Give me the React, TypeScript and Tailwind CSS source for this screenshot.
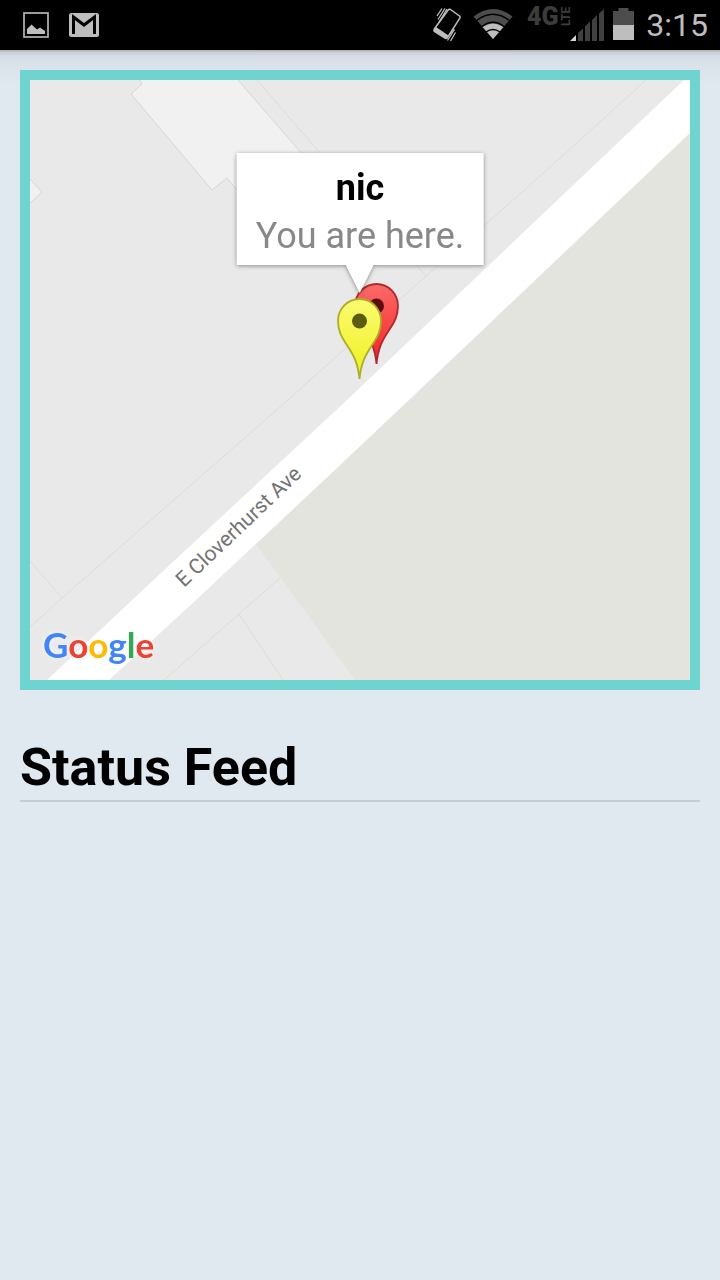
function PictureIcon() {
  return (
    <svg className="h-[26px] w-[26px]" viewBox="0 0 26 26" aria-hidden="true">
      <rect x="1" y="1" width="24" height="24" fill="none" stroke="#b4b7b2" strokeWidth="1.7" />
      <path d="M4 22V17L8.5 12.5L14 17.5L17 15.5L22 19V22Z" fill="#bebebe" />
    </svg>
  );
}

function MailIcon() {
  return (
    <svg className="h-[24px] w-[30px]" viewBox="0 0 30 24" aria-hidden="true">
      <rect width="30" height="24" rx="2.5" fill="#bebebe" />
      <path d="M4.5 21V4L15 12L25.5 4V21" fill="none" stroke="#000" strokeWidth="3" />
    </svg>
  );
}

function VibrateIcon() {
  return (
    <svg className="h-[34px] w-[28px]" viewBox="0 0 28 34" aria-hidden="true">
      <path
        d="M17.500 1.500L26.500 8Q27.500 9 26.800 10.200L14.500 29.500Q13.500 31 12 30.200L1.500 23.500Q0.500 22.500 1.300 21L15 2.200Q16 .8 17.500 1.500Z"
        fill="none"
        stroke="#bebebe"
        strokeWidth="1.500"
      />
      <path d="M3 19L15.500 27.500L13 31L1 23.500V21.500Z" fill="#bebebe" />
      <path d="M4 8L9 .5M5 11.500L12 .5M6 14L14 1" stroke="#bebebe" strokeWidth="1.300" />
      <path d="M14.500 32.500L21.500 21.500M17.500 33L22.500 24.500M17 26L20.500 20.500" stroke="#bebebe" strokeWidth="1.300" />
    </svg>
  );
}

function WifiIcon() {
  return (
    <svg className="h-[30px] w-[40px]" viewBox="0 0 40 30" aria-hidden="true">
      <path d="M0.500 7.500Q20 -7.500 39.500 7.500L20 30Z" fill="#4d4d4d" />
      <path d="M9.500 18Q20 11 30.500 18L20 30Z" fill="#bebebe" />
      <path d="M3.500 11.500Q20 -1 36.500 11.500M9 17.500Q20 9 31 17.500M13 23Q20 18 27 23" fill="none" stroke="#000" strokeWidth="1.500" />
    </svg>
  );
}

function NetworkIcon() {
  return (
    <svg className="h-[50px] w-[78px]" viewBox="0 -8 78 50" role="img" aria-label="4G LTE signal">
      <text x="0" y="17" fill="#3c3c3c" fontFamily="Roboto, sans-serif" fontSize="25" fontWeight="900">
        4G
      </text>
      <text
        transform="translate(43 18) rotate(-90)"
        fill="#3c3c3c"
        fontFamily="Roboto, sans-serif"
        fontSize="12"
        fontWeight="700"
      >
        LTE
      </text>
      <path d="M43 33L49 27V33Z" fill="#d4d4d4" />
      <path d="M51 33V25L56 20.500V33ZM58 33V18.500L63 13.500V33ZM65 33V12L70 7V33ZM72 33V5.500L77 1V33Z" fill="#404040" />
    </svg>
  );
}

function BatteryIcon() {
  return (
    <svg className="h-[32px] w-[21px]" viewBox="0 0 21 32" aria-hidden="true">
      <path d="M0 3H5.500V0H15.500V3H21V17H0Z" fill="#4d4d4d" />
      <path d="M0 17H21V32H0Z" fill="#bebebe" />
    </svg>
  );
}

function StatusBar() {
  return (
    <header className="flex h-[50px] items-center justify-between bg-black pl-[23px] pr-3">
      <div className="flex items-center gap-5">
        <PictureIcon />
        <MailIcon />
      </div>
      <div className="flex items-center gap-3">
        <VibrateIcon />
        <div className="pb-[2px] pr-[2px]">
          <WifiIcon />
        </div>
        <div className="flex items-center gap-2">
          <NetworkIcon />
          <div className="pb-[2px]">
            <BatteryIcon />
          </div>
        </div>
        <time className="text-[32px] leading-[50px] text-[#bebebe]">3:15</time>
      </div>
    </header>
  );
}

type PinProps = { x: number; y: number; fill: string; stroke: string; dot: string };

function Pin({ x, y, fill, stroke, dot }: PinProps) {
  return (
    <g transform={`translate(${x} ${y})`}>
      <path
        d="M0 58C-1.500 42 -6 34 -12 25C-18 16 -21.500 10 -21.500 0A21.500 22 0 0 1 21.500 0C21.500 10 18 16 12 25C6 34 1.500 42 0 58Z"
        fill={fill}
        stroke={stroke}
        strokeWidth="1.800"
      />
      <circle r="7.500" fill={dot} />
    </g>
  );
}

function MapCanvas() {
  return (
    <svg
      className="block h-[600px] w-full"
      viewBox="0 0 660 600"
      preserveAspectRatio="xMidYMid slice"
      role="img"
      aria-label="Map of E Cloverhurst Ave"
    >
      <defs>
        <linearGradient id="yellowPin" x1="0" y1="0" x2="0" y2="1">
          <stop offset="0" stopColor="#fbfb72" />
          <stop offset="0.6" stopColor="#f4f43f" />
          <stop offset="1" stopColor="#eeee22" />
        </linearGradient>
        <linearGradient id="redPin" x1="0" y1="0" x2="0" y2="1">
          <stop offset="0" stopColor="#fb6a6a" />
          <stop offset="0.6" stopColor="#f64040" />
          <stop offset="1" stopColor="#ee2222" />
        </linearGradient>
      </defs>
      <rect width="660" height="600" fill="#e9e9e9" />
      <g fill="#f1f1f1" stroke="#d6d6d6" strokeWidth="1">
        <path d="M109 -1L112 4L101 14L182 110L197 98L206 109L300 106L207 -1Z" />
        <path d="M-1 98L12 112L-1 124Z" />
      </g>
      <g fill="none" stroke="#dedcd9" strokeWidth="1">
        <path d="M616 0L528 80L465 136L396 196L317 267L258 320L201 370L130 432L32 518L0 547" />
        <path d="M227 0L396 196M0 481L32 518M250 498L209 534L134 600M209 534L253 600" />
      </g>
      <path d="M660 53L379 320L226 464L325 600H660Z" fill="#e2e4dd" />
      <path d="M654 0H660V53L379 320L290 404L166 520L79 600H17L131 493L317 320Z" fill="#fff" />
      <text
        transform="translate(154 508) rotate(-43.500)"
        fill="#737373"
        fontFamily="Roboto, sans-serif"
        fontSize="21"
      >
        E Cloverhurst Ave
      </text>
      <text
        className="drop-shadow-[0_0_3px_#f8f8f8]"
        x="13"
        y="578"
        fontFamily="Lato, sans-serif"
        fontSize="35"
        fontWeight="700"
      >
        <tspan fill="#4285f4">G</tspan>
        <tspan fill="#ea4335">o</tspan>
        <tspan fill="#fbbc05">o</tspan>
        <tspan fill="#4285f4">g</tspan>
        <tspan fill="#34a853">l</tspan>
        <tspan fill="#ea4335">e</tspan>
      </text>
      <Pin x={346.5} y={226} fill="url(#redPin)" stroke="#b02a2a" dot="#5c0c0c" />
      <Pin x={329.5} y={241} fill="url(#yellowPin)" stroke="#adad26" dot="#5c5c10" />
    </svg>
  );
}

function Callout() {
  return (
    <div className="absolute left-1/2 top-[73px] flex -translate-x-1/2 flex-col items-center drop-shadow-[0_1px_2px_rgba(0,0,0,0.4)]">
      <div className="whitespace-nowrap bg-white px-[19px] pb-[5px] pt-[11px] text-center text-[36px] leading-[48px]">
        <p className="font-bold text-black">nic</p>
        <p className="text-[#888888]">You are here.</p>
      </div>
      <svg className="block h-[28px] w-[28px]" viewBox="0 0 28 28" aria-hidden="true">
        <path d="M0 0H28L14 28Z" fill="#fff" />
      </svg>
    </div>
  );
}

export default function App() {
  return (
    <div className="min-h-screen bg-[#e0e8f0] font-['Roboto',sans-serif]">
      <StatusBar />
      <main className="bg-[linear-gradient(to_bottom,#a4a9af_0px,#c8ced6_2px,#d5dce4_6px,#dae2ea_16px,#e0e8f0_36px)] px-5 pt-5">
        <section className="relative overflow-hidden border-10 border-[#6fd3cf]">
          <MapCanvas />
          <Callout />
        </section>
        <h1 className="mt-[46px] border-b-2 border-[#c4ccd4] text-[52px] font-bold leading-[64px] text-black">
          Status Feed
        </h1>
      </main>
    </div>
  );
}
